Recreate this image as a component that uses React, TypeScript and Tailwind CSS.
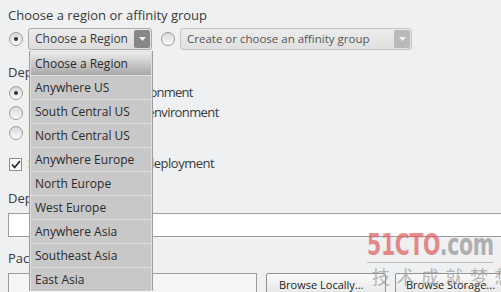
import React from 'react';

const regions = [
  'Choose a Region',
  'Anywhere US',
  'South Central US',
  'North Central US',
  'Anywhere Europe',
  'North Europe',
  'West Europe',
  'Anywhere Asia',
  'Southeast Asia',
  'East Asia',
];

const Radio: React.FC<{ checked?: boolean }> = ({ checked }) => (
  <span className="relative flex h-[14px] w-[14px] shrink-0 items-center justify-center rounded-full border border-[#9a9a9a] bg-gradient-to-b from-[#d8d8d8] to-[#fbfbfb]">
    {checked && <span className="h-[4px] w-[4px] rounded-full bg-[#333]" />}
  </span>
);

const Arrow: React.FC<{ dim?: boolean }> = ({ dim }) => (
  <span
    className={`flex h-[18px] w-[16px] shrink-0 items-center justify-center rounded-[2px] ${
      dim ? 'bg-[#b9b9b9]' : 'bg-[#878787]'
    }`}
  >
    <svg width="7" height="4" viewBox="0 0 7 4">
      <path d="M0 0h7L3.5 4z" fill="#f4f4f4" />
    </svg>
  </span>
);

const App: React.FC = () => {
  return (
    <div className="relative h-[292px] w-[501px] overflow-hidden bg-[#eef0f2] font-['Open_Sans',sans-serif] text-[13px] text-[#3a3a3a]">
      <div className="pl-2 pt-[6px]">
        <div className="h-[18px] leading-[18px]">Choose a region or affinity group</div>

        <div className="mt-[4px] flex h-[22px] items-center whitespace-nowrap">
          <span className="ml-[1px]"><Radio checked /></span>
          <div className="ml-[5px] flex h-[22px] w-[124px] shrink-0 items-center justify-between rounded-[3px] border border-[#a9a9a9] bg-gradient-to-b from-[#ececec] to-[#dcdcdc] pl-[6px] pr-[1px] text-[12px]">
            <span>Choose a Region</span>
            <Arrow />
          </div>
          <span className="ml-[9px]"><Radio /></span>
          <div className="ml-[5px] flex h-[22px] w-[232px] shrink-0 items-center justify-between rounded-[3px] border border-[#c4c4c4] bg-gradient-to-b from-[#ececec] to-[#e0e0e0] pl-[6px] pr-[1px] text-[11.5px] text-[#555]">
            <span>Create or choose an affinity group</span>
            <Arrow dim />
          </div>
        </div>

        <div className="mt-[13px] h-[18px] leading-[18px]">Deployment options</div>
        <div className="mt-[2px] flex flex-col whitespace-nowrap">
          <div className="flex h-[20px] items-center">
            <span className="ml-[1px]"><Radio checked /></span>
            <span className="ml-[5px] tracking-[-0.75px]">Deploy to staging environment</span>
          </div>
          <div className="flex h-[20px] items-center">
            <span className="ml-[1px]"><Radio /></span>
            <span className="ml-[5px] tracking-[-0.6px]">Deploy to production environment</span>
          </div>
          <div className="flex h-[20px] items-center">
            <span className="ml-[1px]"><Radio /></span>
            <span className="ml-[5px]">Do not deploy</span>
          </div>
        </div>

        <div className="mt-[12px] flex h-[18px] items-center whitespace-nowrap">
          <span className="ml-[1px] flex h-[13px] w-[13px] items-center justify-center border border-[#8e8e8e] bg-white">
            <svg width="10" height="9" viewBox="0 0 10 9">
              <path d="M1 4.5l2.6 3L9 1" stroke="#222" strokeWidth="1.6" fill="none" />
            </svg>
          </span>
          <span className="ml-[6px] tracking-[-0.5px]">Start after successful deployment</span>
        </div>

        <div className="mt-[16px] h-[18px] leading-[18px]">Deployment name</div>
        <div className="mt-[6px] h-[24px] border border-r-0 border-[#9c9c9c] bg-white" />

        <div className="mt-[12px] h-[18px] leading-[18px]">Package location</div>
        <div className="mt-[6px] flex h-[24px] items-start gap-[9px] whitespace-nowrap text-[11px]">
          <div className="h-[24px] w-[249px] shrink-0 border border-[#9c9c9c] bg-[#f4f5f6]" />
          <div className="flex h-[24px] w-[120px] shrink-0 items-center rounded-[2px] border border-[#8f8f8f] bg-gradient-to-b from-[#fafafa] to-[#e6e6e6] pl-[12px] text-[#222]">
            Browse Locally...
          </div>
          <div className="flex h-[24px] w-[120px] shrink-0 items-center rounded-[2px] border border-[#8f8f8f] bg-gradient-to-b from-[#fafafa] to-[#e6e6e6] pl-[10px] text-[#222]">
            Browse Storage...
          </div>
        </div>
      </div>

      {/* open region dropdown */}
      <div className="absolute left-[29px] top-[51px] flex w-[124px] flex-col gap-[1px] whitespace-nowrap border-x border-[#9d9d9d] bg-[#dedede] px-[1px] pt-[1px] text-[12px]">
        {regions.map((r, i) => (
          <div
            key={r}
            className={`flex h-[23px] items-center pl-[4px] text-[#2a2a2a] ${
              i === 0 ? 'bg-gradient-to-b from-[#ececec] to-[#a8a8a8]' : 'bg-[#c8c8c8]'
            }`}
          >
            {r}
          </div>
        ))}
      </div>

      {/* watermark */}
      <div className="pointer-events-none absolute left-[367px] top-[228px] flex w-[130px] flex-col items-start opacity-75">
        <div className="origin-left scale-x-[0.66] whitespace-nowrap font-['DejaVu_Sans',sans-serif] text-[31px] font-bold leading-[33px] tracking-[-0.5px]">
          <span className="text-[#e06565]">51CTO</span>
          <span className="text-[#9a9a9a]">.com</span>
        </div>
        <div className="mt-[1px] h-[1px] w-[126px] bg-[#aaaaaa]" />
        <div className="ml-[5px] mt-[2px] whitespace-nowrap font-['Noto_Sans_CJK_SC',sans-serif] text-[18px] leading-[22px] tracking-[6.5px] text-[#a0a0a0]">
          技术成就梦想
        </div>
      </div>
    </div>
  );
};

export default App;
